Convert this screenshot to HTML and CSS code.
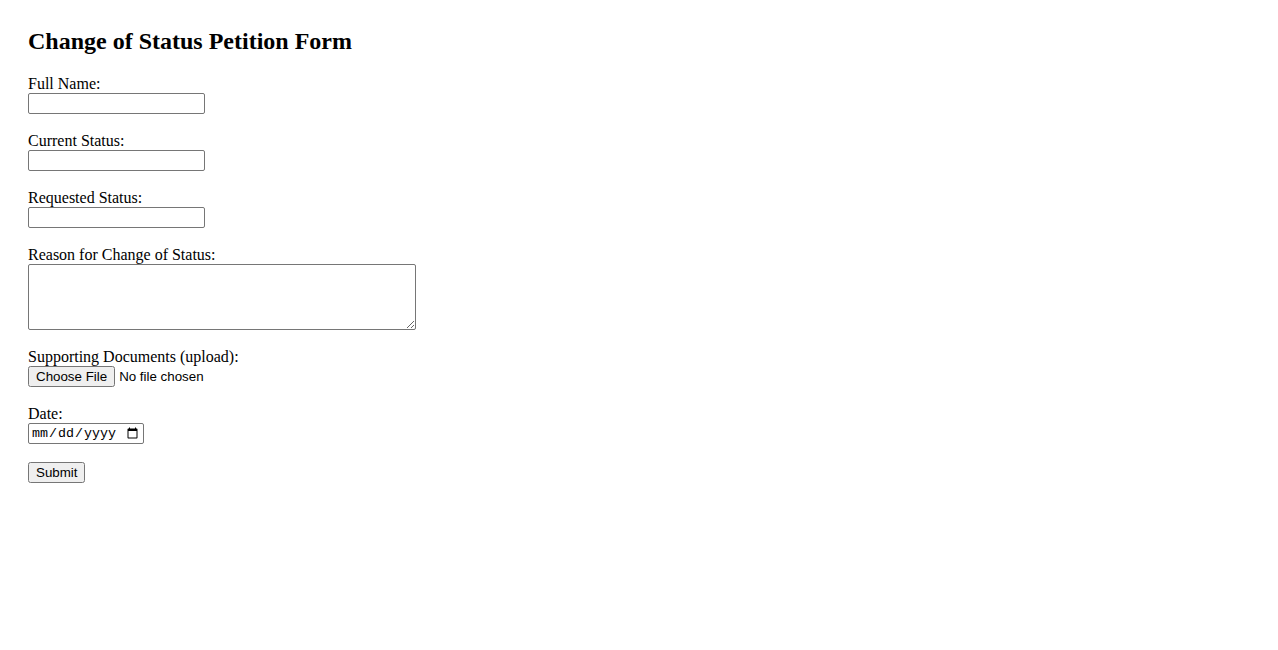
FILE: index.html
```html
<!DOCTYPE html>
<html lang="en">
<head>
    <meta charset="UTF-8">
    <meta name="viewport" content="width=device-width, initial-scale=1.0">
    <title>Change of Status Petition Form</title>
    <link rel="stylesheet" href="styles.css">
</head>
<body>
    <div class="petition">
        <h2>Change of Status Petition Form</h2>
        <form action="#" method="post" enctype="multipart/form-data">
            <label for="fullName">Full Name:</label><br>
            <input type="text" id="fullName" name="fullName" class="text-input"><br><br>

            <label for="currentStatus">Current Status:</label><br>
            <input type="text" id="currentStatus" name="currentStatus" class="text-input"><br><br>

            <label for="requestedStatus">Requested Status:</label><br>
            <input type="text" id="requestedStatus" name="requestedStatus" class="text-input"><br><br>

            <label for="reason">Reason for Change of Status:</label><br>
            <textarea id="reason" name="reason" class="reason-box"></textarea><br><br>

            <label for="documents">Supporting Documents (upload):</label><br>
            <input type="file" id="documents" name="documents" class="file-input"><br><br>

            <label for="date">Date:</label><br>
            <input type="date" id="date" name="date" class="date-input"><br><br>

            <input type="submit" value="Submit" class="submit-btn">
        </form>
    </div>
</body>
</html>
```

FILE: styles.css
```css
body {
    font-family: "Liberation Serif", "Times New Roman", serif;
    font-size: 16px;
    color: #000;
    background-color: #fff;
    margin: 0;
}
.petition {
    padding: 27px 28px;
}
h2 {
    font-size: 24px;
    margin: 0 0 20px 0;
    line-height: 28px;
}
.text-input,
.file-input,
.submit-btn {
    font-family: "Liberation Sans", Arial, sans-serif;
    font-size: 13.333px;
}
.text-input {
    width: 177px;
    height: 21px;
    box-sizing: border-box;
    border: 1px solid #767676;
    border-radius: 2px;
    padding: 1px 2px;
    margin: 0;
}
.reason-box {
    width: 388px;
    height: 66px;
    box-sizing: border-box;
    border: 1px solid #767676;
    border-radius: 2px;
    margin: 0;
    vertical-align: bottom;
    font-family: "Liberation Mono", monospace;
    font-size: 13.333px;
}
.file-input {
    margin: 0;
}
.date-input {
    font-family: "Liberation Mono", monospace;
    font-size: 13.333px;
    width: 116px;
    height: 21px;
    box-sizing: border-box;
    border: 1px solid #767676;
    border-radius: 2px;
    padding: 1px 2px;
    margin: 0;
}
.submit-btn {
    margin: 0;
}
```
